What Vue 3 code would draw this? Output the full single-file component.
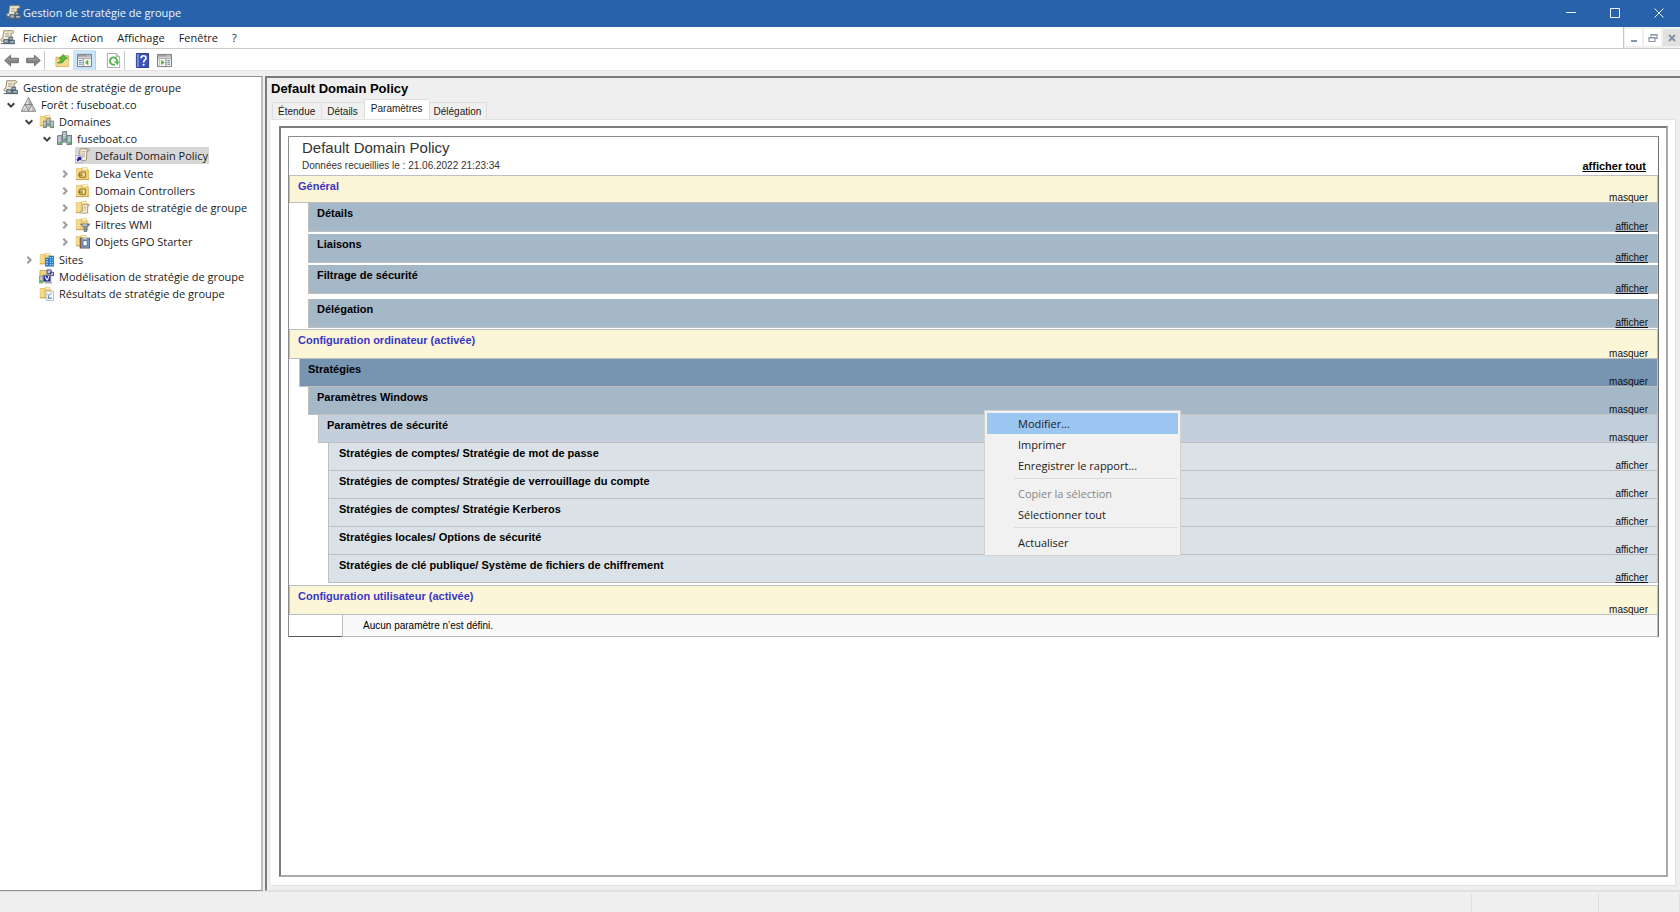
<script setup>
import { ref } from 'vue'

const menus = ['Fichier', 'Action', 'Affichage', 'Fenêtre', '?']

const tree = [
  { level: 0, icon: 'gpmc', label: 'Gestion de stratégie de groupe' },
  { level: 1, icon: 'forest', label: 'Forêt : fuseboat.co', open: true },
  { level: 2, icon: 'domains', label: 'Domaines', open: true },
  { level: 3, icon: 'domain', label: 'fuseboat.co', open: true },
  { level: 4, icon: 'gpo-link', label: 'Default Domain Policy', selected: true },
  { level: 4, icon: 'ou', label: 'Deka Vente', open: false, spaced: true },
  { level: 4, icon: 'ou', label: 'Domain Controllers', open: false },
  { level: 4, icon: 'gpo-folder', label: 'Objets de stratégie de groupe', open: false },
  { level: 4, icon: 'wmi', label: 'Filtres WMI', open: false },
  { level: 4, icon: 'starter', label: 'Objets GPO Starter', open: false },
  { level: 2, icon: 'sites', label: 'Sites', open: false, spaced: true },
  { level: 2, icon: 'modeling', label: 'Modélisation de stratégie de groupe' },
  { level: 2, icon: 'results', label: 'Résultats de stratégie de groupe' },
]

const tabs = ['Étendue', 'Détails', 'Paramètres', 'Délégation']
const activeTab = ref('Paramètres')

const sections = [
  { title: 'Général', kind: 'top', action: 'masquer' },
  { title: 'Détails', kind: 'info', action: 'afficher', underline: true },
  { title: 'Liaisons', kind: 'info', action: 'afficher', underline: true },
  { title: 'Filtrage de sécurité', kind: 'info', action: 'afficher', underline: true },
  { title: 'Délégation', kind: 'info last', action: 'afficher', underline: true },
  { title: 'Configuration ordinateur (activée)', kind: 'top tall', action: 'masquer' },
  { title: 'Stratégies', kind: 'policies', action: 'masquer' },
  { title: 'Paramètres Windows', kind: 'windows', action: 'masquer' },
  { title: 'Paramètres de sécurité', kind: 'security', action: 'masquer' },
  { title: 'Stratégies de comptes/ Stratégie de mot de passe', kind: 'leaf', action: 'afficher' },
  { title: 'Stratégies de comptes/ Stratégie de verrouillage du compte', kind: 'leaf', action: 'afficher' },
  { title: 'Stratégies de comptes/ Stratégie Kerberos', kind: 'leaf', action: 'afficher' },
  { title: 'Stratégies locales/ Options de sécurité', kind: 'leaf', action: 'afficher' },
  { title: 'Stratégies de clé publique/ Système de fichiers de chiffrement', kind: 'leaf', action: 'afficher', underline: true },
  { title: 'Configuration utilisateur (activée)', kind: 'top tall spaced', action: 'masquer' },
]

const contextGroups = [
  [{ label: 'Modifier...', hot: true }, { label: 'Imprimer' }, { label: 'Enregistrer le rapport...' }],
  [{ label: 'Copier la sélection', disabled: true }, { label: 'Sélectionner tout' }],
  [{ label: 'Actualiser' }],
]

const indent = (level) => ({ paddingLeft: `${3 + Math.max(level - 1, 0) * 18}px` })
</script>

<template>
  <div class="window">
    <svg class="defs" aria-hidden="true">
      <symbol id="folder" viewBox="0 0 16 16">
        <path d="M1 2.500h5l1.500-1h6V4H15v10.500H1z" fill="#e0ba5e" />
        <path d="M1.500 3h5v11h-5z" fill="#f6da8e" />
        <path d="M6.500 4.500h8v9.500h-8z" fill="#efcd78" />
        <path d="M8 2h5v2H8z" fill="#fff3d0" />
        <path d="M1 14.500h14" stroke="#c19b45" />
      </symbol>
      <symbol id="scroll" viewBox="0 0 16 16">
        <path d="M5 1h9.500c1 1 .7 2.500-.8 2.500H12.500L12 12.500c0 1.500-1 2-2 2H2c-1.500-.5-1.500-2.500 0-3h2.300L4.500 3C4.500 2 4.500 1.300 5 1z" fill="#f7f1da" stroke="#8d8466" />
        <path d="M6.500 4h4M6.400 6h4M6.300 8h4M6.200 10h4" stroke="#a89d7a" stroke-width=".8" />
        <path d="M12.500 1.500v2" stroke="#7d7458" stroke-width=".8" />
      </symbol>
      <symbol id="gpmc" viewBox="0 0 16 16">
        <path d="M4 .8h10c1.300.9.8 2.600-.7 2.600h-1.500V12H2c-1.600-.5-1.500-2.500.1-3H3z" fill="#f5efd8" stroke="#8e856a" />
        <path d="M5.500 3.500h4.500M5.400 5.300h4.500M5.300 7h4" stroke="#9f9678" stroke-width=".8" />
        <path d="M4 10h5.500v4.500H4zM9.500 7.500h4v4h-4zM10 11h5.500v3.500H10z" fill="#7f919f" stroke="#465663" stroke-width=".8" />
        <path d="M.8 14.500h15" stroke="#56626b" />
        <path d="M5 12h3M11 9h1.500M11 12.500h3.500" stroke="#d6e2ea" stroke-width=".8" />
      </symbol>
      <symbol id="forest" viewBox="0 0 16 16">
        <path d="M8 .3l7.800 15H.2z" fill="#e2e3e4" stroke="#77797b" stroke-width=".9" />
        <path d="M8 .8l3.700 7.200H8z" fill="#a4a8ab" />
        <path d="M4.200 8h7.600L8 15z" fill="#c3c6c8" stroke="#77797b" stroke-width=".9" />
        <path d="M5 11.500L4 15H1zM12 9l3 6h-3z" fill="#b0b4b7" />
      </symbol>
      <symbol id="tower" viewBox="0 0 6 11">
        <path d="M.5 1.200L2 .3h3.500v10.200h-5z" fill="#9ba9b2" stroke="#4f5e69" stroke-width=".8" />
        <path d="M1.300 2.700h2.900M1.300 4.700h2.900M1.300 6.500h2.900" stroke="#e9eff2" stroke-width=".8" />
        <path d="M3 8h2v2H3z" fill="#35bd33" />
      </symbol>
      <symbol id="domain" viewBox="0 0 16 16">
        <use href="#tower" x="5" y="0" width="6" height="11" />
        <path d="M2 9.500h12v3H2z" fill="#8c98a0" />
        <use href="#tower" x="0" y="4" width="6" height="11" />
        <use href="#tower" x="10" y="4" width="6" height="11" />
      </symbol>
      <symbol id="domains" viewBox="0 0 16 16">
        <use href="#folder" x="0" y="0" width="14" height="14" />
        <use href="#domain" x="4" y="4" width="12" height="12" />
      </symbol>
      <symbol id="gpo-link" viewBox="0 0 16 16">
        <use href="#scroll" x="1" y="0" width="15" height="15" />
        <path d="M.5 8h7v7.500h-7z" fill="#f4f4fb" stroke="#a5a7bb" stroke-width=".8" />
        <path d="M1.500 12.500l2-2L2 9.300h4.700v4.500l-1.400-1.400-2.200 2.200z" fill="#25218f" />
      </symbol>
      <symbol id="ou" viewBox="0 0 16 16">
        <use href="#folder" width="16" height="16" />
        <path d="M5 6.500h6v5.500H5z" fill="#fbe9a6" stroke="#8b6d1c" />
        <path d="M3.500 8h4.500v3H3.500z" fill="#8b6d1c" />
        <path d="M5 9.500h2" stroke="#f5df95" />
      </symbol>
      <symbol id="gpo-folder" viewBox="0 0 16 16">
        <use href="#folder" x="0" y="0" width="15" height="15" />
        <use href="#scroll" x="5" y="4" width="11" height="11" />
      </symbol>
      <symbol id="wmi" viewBox="0 0 16 16">
        <use href="#folder" x="0" y="0" width="15" height="15" />
        <path d="M6 7.500h10l-3.500 4V15.500h-2.700v-4z" fill="#8495a4" stroke="#4f6070" stroke-width=".8" />
        <path d="M8 8.500h4.500" stroke="#e4ecf3" />
      </symbol>
      <symbol id="starter" viewBox="0 0 16 16">
        <use href="#folder" x="0" y="0" width="14" height="14" />
        <path d="M5 4h11v11.500H5z" fill="#7a5a48" />
        <path d="M6.500 5h8.500v9.500H6.500z" fill="#7c9cc4" />
        <path d="M8.500 7h4.500v5.500H8.500z" fill="#f4f8fc" stroke="#33537f" stroke-width=".7" />
        <path d="M8 3.500h5v2H8z" fill="#c7cbd1" />
      </symbol>
      <symbol id="sites" viewBox="0 0 16 16">
        <use href="#folder" x="0" y="0" width="14" height="14" />
        <path d="M6.500 6h4V4h5.500v11.500H6.500z" fill="#2377c4" />
        <path d="M7.500 8h2M7.500 10.500h2M7.500 13h2M11.500 6h1.500M14 6h1.200M11.500 8.500h1.500M14 8.500h1.200M11.500 11h1.500M14 11h1.200M11.500 13.500h1.500M14 13.500h1.200" stroke="#a9dcfb" stroke-width="1.200" />
      </symbol>
      <symbol id="modeling" viewBox="0 0 16 16">
        <path d="M1 1.500h9v7H1z" fill="#efcf80" stroke="#b99243" stroke-width=".7" />
        <path d="M8.500 1h4.500v4H8.500zM12 3.500h3.500v3.500H12z" fill="#c9cbe8" stroke="#3d3f85" />
        <path d="M4.500 6.500h8v7h-8z" fill="#1e2fa8" stroke="#85898f" />
        <path d="M6.500 8l2 4M10.500 7.500L9 12" stroke="#f2f4ff" stroke-width="1.200" />
        <path d="M.5 7.500h3.500v7.500H.5z" fill="#c6cdc6" stroke="#6c786c" stroke-width=".7" />
        <path d="M1 12h2.500v2H1z" fill="#35ba38" />
        <path d="M6 14.800h8" stroke="#777c83" />
      </symbol>
      <symbol id="results" viewBox="0 0 16 16">
        <use href="#folder" x="0" y="0" width="14" height="14" />
        <path d="M7.500 5.500h8v10h-8z" fill="#fdfdfe" stroke="#a7adb5" stroke-width=".8" />
        <path d="M9 9l1.500 1L13.500 7.500M9 13h5M9.700 10.500l1 2.500" stroke="#3a71b8" fill="none" />
      </symbol>
      <symbol id="arrow" viewBox="0 0 16 16">
        <path d="M.7 8l6.300-5.700v3.300h8.300v4.800H7v3.300z" fill="#858585" stroke="#636363" stroke-width=".9" stroke-linejoin="round" />
        <path d="M3 8l3-2.500V7h8" fill="none" stroke="#a8a8a8" stroke-width=".8" />
      </symbol>
      <symbol id="up" viewBox="0 0 16 16">
        <path d="M1 4.500h5l1-1.500h7.500v11.500H1z" fill="#edcb7c" stroke="#c7a352" stroke-width=".8" />
        <path d="M1.500 7h13v7h-13z" fill="#f4d88f" />
        <path d="M2.500 10.500c2.500-.5 3.800-2 4-4.500H4.500l4.300-4.500L13 6h-2.500c-.4 3.500-3 5.500-8 4.500z" fill="#55bd3a" stroke="#348c24" stroke-width=".7" />
      </symbol>
      <symbol id="pane" viewBox="0 0 16 16">
        <path d="M.5 1.500h15v13H.5z" fill="#f5f5f5" stroke="#74787c" />
        <path d="M1 2h14v2H1z" fill="#9a9ea2" />
        <path d="M11 3h1M13 3h1" stroke="#fff" />
        <path d="M1 5.500h14" stroke="#85898d" />
      </symbol>
      <symbol id="tree-pane" viewBox="0 0 16 16">
        <use href="#pane" width="16" height="16" />
        <path d="M6.500 6v8" stroke="#74787c" />
        <path d="M2 8h3M2 10h3M2 12h3" stroke="#4f7fae" />
        <path d="M12 7v6L8.500 10z" fill="#4db32e" />
      </symbol>
      <symbol id="action-pane" viewBox="0 0 16 16">
        <use href="#pane" width="16" height="16" />
        <path d="M9.500 6v8" stroke="#74787c" />
        <path d="M11 8h3M11 10h3M11 12h3" stroke="#4f7fae" />
        <path d="M4.500 7v6l3.500-3z" fill="#4db32e" />
        <path d="M2.500 6v8" stroke="#b7babd" />
      </symbol>
      <symbol id="refresh" viewBox="0 0 16 16">
        <path d="M1.500 .5h9.500l3.500 3.500v11.500h-13z" fill="#fafafa" stroke="#a9a9a9" />
        <path d="M11 .5v3.500h3.500" fill="#ddd" stroke="#a9a9a9" />
        <path d="M9.500 12.200A3.900 3.900 0 1 1 11.900 9" fill="none" stroke="#4cb848" stroke-width="1.900" />
        <path d="M8.500 8.800h5.300L12.500 13z" fill="#4cb848" />
      </symbol>
      <symbol id="help" viewBox="0 0 16 16">
        <path d="M1.500 .5h13v15h-13z" fill="#3d55bb" stroke="#24368a" />
        <path d="M2 1h2v14H2z" fill="#7d91df" />
        <path d="M6.500 5.500c0-3.400 5.500-3.300 5.300-.2C11.700 7.200 9.200 7.500 9.200 10" fill="none" stroke="#fff" stroke-width="1.700" />
        <circle cx="9.200" cy="12.500" r="1.100" fill="#fff" />
      </symbol>
    </svg>

    <header class="titlebar">
      <svg class="icon"><use href="#gpmc" /></svg>
      <h1>Gestion de stratégie de groupe</h1>
      <div class="caption">
        <button aria-label="Réduire"><svg viewBox="0 0 10 10"><path d="M0 4.500h10" /></svg></button>
        <button aria-label="Agrandir"><svg viewBox="0 0 10 10"><path d="M.5 .5h9v9h-9z" /></svg></button>
        <button aria-label="Fermer"><svg viewBox="0 0 10 10"><path d="M.5 .5l9 9M9.500 .5l-9 9" /></svg></button>
      </div>
    </header>

    <nav class="menubar">
      <svg class="icon"><use href="#gpmc" /></svg>
      <button v-for="m in menus" :key="m" class="menu">{{ m }}</button>
      <div class="child-caption">
        <button aria-label="Réduire la fenêtre"><svg viewBox="0 0 10 10"><path d="M2 8h6" stroke-width="2" /></svg></button>
        <button aria-label="Restaurer la fenêtre"><svg viewBox="0 0 10 10"><path d="M3 3.500V1.500h6v4H7M1 4.500h6v4H1zM1 5h6M3 2h6" stroke-width="1.200" /></svg></button>
        <button class="close" aria-label="Fermer la fenêtre"><svg viewBox="0 0 10 10"><path d="M2 2l6 6M8 2l-6 6" stroke-width="2" /></svg></button>
      </div>
    </nav>

    <div class="toolbar">
      <button aria-label="Précédent"><svg class="icon"><use href="#arrow" /></svg></button>
      <button aria-label="Suivant"><svg class="icon flip"><use href="#arrow" /></svg></button>
      <span class="sep"></span>
      <button aria-label="Dossier parent"><svg class="icon"><use href="#up" /></svg></button>
      <button class="on" aria-label="Arborescence"><svg class="icon"><use href="#tree-pane" /></svg></button>
      <span class="sep"></span>
      <button aria-label="Actualiser"><svg class="icon"><use href="#refresh" /></svg></button>
      <span class="sep"></span>
      <button aria-label="Aide"><svg class="icon"><use href="#help" /></svg></button>
      <button aria-label="Volet Actions"><svg class="icon"><use href="#action-pane" /></svg></button>
    </div>

    <main class="main">
      <ul class="tree">
        <li v-for="(n, i) in tree" :key="i" class="node" :class="{ spaced: n.spaced }" :style="indent(n.level)">
          <span v-if="n.level" class="twist">
            <svg v-if="n.open" class="chev down" viewBox="0 0 8 8"><path d="M.7 2.300L4 5.600l3.300-3.300" /></svg>
            <svg v-else-if="n.open === false" class="chev" viewBox="0 0 8 8"><path d="M2.300 .7L5.600 4 2.300 7.300" /></svg>
          </span>
          <span class="entry" :class="{ selected: n.selected }">
            <svg class="icon"><use :href="'#' + n.icon" /></svg>
            <span>{{ n.label }}</span>
          </span>
        </li>
      </ul>

      <section class="details">
        <h2>Default Domain Policy</h2>
        <div class="tabs" role="tablist">
          <button
            v-for="t in tabs"
            :key="t"
            role="tab"
            :aria-selected="t === activeTab"
            :class="{ active: t === activeTab }"
            @click="activeTab = t"
          >{{ t }}</button>
        </div>
        <div class="page">
          <div class="browser">
            <article class="report">
              <header class="report-head">
                <div>
                  <h3>Default Domain Policy</h3>
                  <p>Données recueillies le : 21.06.2022 21:23:34</p>
                </div>
                <a href="#">afficher tout</a>
              </header>
              <div v-for="s in sections" :key="s.title" class="row" :class="s.kind">
                <h4>{{ s.title }}</h4>
                <a href="#" :class="{ underline: s.underline }">{{ s.action }}</a>
              </div>
              <div class="empty">
                <span class="stub"></span>
                <p>Aucun paramètre n’est défini.</p>
              </div>
            </article>
          </div>
        </div>
      </section>
    </main>

    <footer class="status"><span></span><span class="b"></span><span class="c"></span></footer>

    <div class="context" role="menu">
      <div v-for="(g, i) in contextGroups" :key="i" class="group">
        <button v-for="c in g" :key="c.label" role="menuitem" :disabled="c.disabled" :class="{ hot: c.hot }">{{ c.label }}</button>
      </div>
    </div>
  </div>
</template>

<style>
html,
body {
  margin: 0;
  height: 100%;
}
</style>

<style scoped>
* {
  box-sizing: border-box;
}
.window {
  position: relative;
  display: flex;
  flex-direction: column;
  min-height: 100vh;
  overflow: hidden;
  background: #efefef;
  color: #1b1b1b;
  font: 11px/16px "Open Sans", "Noto Sans", sans-serif;
}
.defs {
  position: absolute;
  width: 0;
  height: 0;
}
h1, h2, h3, h4, p, ul {
  margin: 0;
  padding: 0;
  font-weight: normal;
  list-style: none;
}
button {
  margin: 0;
  padding: 0;
  border: 0;
  background: none;
  color: inherit;
  font: inherit;
}
.icon {
  flex: none;
  display: block;
  width: 15px;
  height: 15px;
}
.titlebar {
  display: flex;
  align-items: center;
  height: 27px;
  padding: 0 0 2px 6px;
  gap: 2px;
  background: #2862ab;
  color: #eef4fb;
}
.titlebar h1 {
  font-size: 11px;
}
.caption {
  display: flex;
  margin-left: auto;
}
.caption button {
  display: grid;
  place-items: center;
  width: 44px;
  height: 23px;
  padding-left: 2px;
}
.caption svg {
  width: 10px;
  height: 10px;
  fill: none;
  stroke: #eef4fb;
}
.menubar {
  display: flex;
  align-items: center;
  gap: 14px;
  height: 22px;
  border-bottom: 1px solid #cacaca;
  background: #fff;
}
.menubar .icon {
  margin-right: -6px;
}
.child-caption {
  display: flex;
  gap: 2px;
  align-items: center;
  align-self: stretch;
  margin-left: auto;
  padding-left: 1px;
  border-left: 1px solid #c4c4c4;
  background: #f0f0f0;
}
.child-caption button {
  display: grid;
  place-items: center;
  width: 17px;
  height: 17px;
  background: #fff;
}
.child-caption .close {
  background: #e1e1e1;
}
.child-caption svg {
  width: 10px;
  height: 10px;
  fill: none;
  stroke: #8796a5;
}
.toolbar {
  display: flex;
  align-items: center;
  height: 22px;
  padding-top: 1px;
  border-bottom: 1px solid #e4e4e4;
  background: #fff;
}
.toolbar button {
  display: grid;
  place-items: center;
  width: 22px;
  height: 20px;
}
.toolbar .on {
  background: #cde5fb;
}
.toolbar .flip {
  transform: scaleX(-1);
}
.sep {
  width: 1px;
  height: 19px;
  margin-right: 6px;
  background: #c9c9c9;
}
.main {
  flex: 1;
  display: flex;
  gap: 2px;
  padding-top: 5px;
}
.tree {
  flex: none;
  width: 263px;
  padding-top: 2px;
  border: solid #8d9095;
  border-width: 1px 2px 1px 0;
  border-right-color: #bcbfc6;
  background: #fff;
}
.node {
  display: flex;
  align-items: center;
  height: 17px;
}
.node.spaced {
  margin-top: 1px;
}
.twist {
  flex: none;
  display: flex;
  width: 18px;
  padding-left: 4px;
}
.chev {
  width: 8px;
  height: 8px;
  fill: none;
  stroke: #9a9a9a;
  stroke-width: 2;
}
.chev.down {
  stroke: #404040;
}
.entry {
  display: flex;
  align-items: center;
  height: 17px;
  gap: 5px;
  white-space: nowrap;
}
.entry.selected {
  padding-right: 1px;
  background: #d7d7d7;
}
.details {
  flex: 1;
  display: flex;
  flex-direction: column;
  padding: 3px 4px 4px 4px;
  border: solid #7b7b7b;
  border-width: 2px 0 0 2px;
  border-bottom: 1px solid #dcdcdc;
  font-family: "Liberation Sans", Arial, sans-serif;
  font-size: 10px;
}
.details h2 {
  color: #000;
  font-size: 13px;
  font-weight: bold;
  line-height: 16px;
}
.tabs {
  display: flex;
  align-items: flex-end;
  padding: 2px 0 0 1px;
}
.tabs button {
  height: 17px;
  padding: 0 6px 0 5px;
  border: 1px solid #dedede;
  border-bottom: 0;
  border-right: 0;
  background: #f0f0f0;
  line-height: 17px;
}
.tabs button:last-child {
  padding: 0 5px 0 4px;
  border-right: 1px solid #dedede;
}
.tabs .active {
  height: 20px;
  padding: 0 6px 2px;
  background: #fff;
}
.page {
  flex: 1;
  display: flex;
  padding: 6px 7px 8px 8px;
  border: solid #e2e2e2;
  border-width: 1px 1px 1px 0;
  background: #fff;
}
.browser {
  flex: 1;
  padding: 8px 7px;
  border: 2px solid #7d7d7d;
  border-right-color: #aaa;
  border-bottom-color: #aaa;
}
.report {
  border: 1px solid #707070;
  border-left-color: #8c8c8c;
  border-top-color: #8c8c8c;
  border-bottom: 0;
}
.report-head {
  display: flex;
  justify-content: space-between;
  align-items: flex-end;
  height: 38px;
  padding: 0 12px 1px 13px;
  color: #333;
}
.report-head h3 {
  font-size: 15px;
  line-height: 20px;
}
.report-head p {
  line-height: 16px;
}
.report-head a {
  color: #000;
  font-size: 11px;
  font-weight: bold;
}
.row {
  display: flex;
  justify-content: space-between;
  align-items: flex-end;
  height: 28px;
  padding-right: 9px;
  border: solid #bfbfbf;
  border-width: 0 1px 1px;
  color: #000;
}
.row h4 {
  align-self: flex-start;
  padding: 4px 0 0 8px;
  font-size: 11px;
  font-weight: bold;
  line-height: 12px;
}
.row a {
  height: 11px;
  margin-bottom: -1px;
  overflow: hidden;
  color: #111;
  line-height: 12px;
  text-decoration: none;
}
.row a.underline {
  text-decoration: underline;
}
.row.top {
  border-top-width: 1px;
  background: #fcf6d9;
}
.row.top h4 {
  color: #3a37c4;
}
.row.tall {
  height: 30px;
}
.row.spaced {
  margin-top: 2px;
}
.row.info {
  height: 29px;
  margin: 0 0 2px 19px;
  background: #a5b8c8;
}
.row.info + .row.info.last {
  margin-top: 5px;
  margin-bottom: 1px;
}
.row.policies {
  margin-left: 10px;
  background: #7795b0;
}
.row.windows {
  margin-left: 19px;
  background: #a5b8c8;
}
.row.security {
  margin-left: 29px;
  background: #c3d0db;
}
.row.leaf {
  margin-left: 39px;
  background: #dae1e7;
}
.row.leaf h4 {
  padding-left: 10px;
}
.empty {
  display: flex;
  height: 22px;
}
.stub {
  width: 53px;
  border-bottom: 1px solid #555;
}
.empty p {
  flex: 1;
  padding-left: 20px;
  border: solid #bcbcbc;
  border-width: 0 1px 1px;
  background: #f9f9f9;
  color: #000;
  line-height: 22px;
}
.status {
  display: flex;
  justify-content: flex-end;
  height: 21px;
  padding-top: 2px;
  border-top: 1px solid #e2e2e2;
}
.status span {
  border-right: 1px solid #dfdfdf;
}
.status .b {
  width: 127px;
}
.status .c {
  width: 81px;
}
.context {
  position: absolute;
  left: 984px;
  top: 410px;
  width: 197px;
  padding: 2px;
  border: 1px solid #d2d2d2;
  background: #f1f1f1;
}
.group button {
  display: block;
  width: 100%;
  height: 21px;
  padding-left: 31px;
  text-align: left;
}
.group button.hot {
  background: #9cc6f2;
}
.group button:disabled {
  color: #868686;
}
.group + .group::before {
  content: "";
  display: block;
  margin: 2px 0 4px 27px;
  border-top: 1px solid #dcdcdc;
}
</style>
